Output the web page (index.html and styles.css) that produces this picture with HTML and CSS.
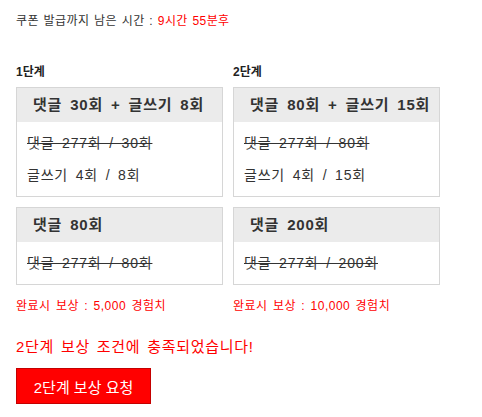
FILE: index.html
```html
<!DOCTYPE html>
<html lang="ko">
<head>
<meta charset="utf-8">
<link rel="stylesheet" href="styles.css">
</head>
<body>
<div class="page">
  <p class="timer">쿠폰 발급까지 남은 시간 : <span class="red">9시간 55분후</span></p>
  <div class="stages">
    <div class="stage">
      <h3 class="stage-title">1단계</h3>
      <div class="box">
        <div class="box-head">댓글 30회 + 글쓰기 8회</div>
        <div class="box-body">
          <div class="line done">댓글 277회 / 30회</div>
          <div class="line">글쓰기 4회 / 8회</div>
        </div>
      </div>
      <div class="box">
        <div class="box-head">댓글 80회</div>
        <div class="box-body">
          <div class="line done">댓글 277회 / 80회</div>
        </div>
      </div>
      <p class="reward">완료시 보상 : 5,000 경험치</p>
    </div>
    <div class="stage">
      <h3 class="stage-title">2단계</h3>
      <div class="box">
        <div class="box-head">댓글 80회 + 글쓰기 15회</div>
        <div class="box-body">
          <div class="line done">댓글 277회 / 80회</div>
          <div class="line">글쓰기 4회 / 15회</div>
        </div>
      </div>
      <div class="box">
        <div class="box-head">댓글 200회</div>
        <div class="box-body">
          <div class="line done">댓글 277회 / 200회</div>
        </div>
      </div>
      <p class="reward">완료시 보상 : 10,000 경험치</p>
    </div>
  </div>
  <p class="message">2단계 보상 조건에 충족되었습니다!</p>
  <button class="request">2단계 보상 요청</button>
</div>
</body>
</html>
```
FILE: styles.css
```css
* { box-sizing: border-box; }
body {
  margin: 0;
  font-family: "Liberation Sans", "Noto Sans CJK KR", sans-serif;
  color: #333;
  background: #fff;
}
.page { padding: 13px 16px 0 16px; }
.timer {
  margin: 0;
  font-size: 12px;
  line-height: 16px;
  color: #333;
  letter-spacing: 0.4px;
  word-spacing: 1px;
}
.red { color: #f00; }
.stages {
  display: flex;
  gap: 10px;
  margin-top: 35px;
}
.stage { width: 207px; display: flex; flex-direction: column; }
.stage-title {
  margin: 0 0 7px 0;
  font-size: 12px;
  line-height: 16px;
  font-weight: bold;
  color: #222;
}
.box {
  width: 207px;
  border: 1px solid #d6d6d6;
  margin-bottom: 10px;
}
.box-head {
  background: #ebebeb;
  font-size: 15px;
  font-weight: bold;
  line-height: 18px;
  padding: 8px 16px;
  color: #333;
  letter-spacing: 0.8px;
  word-spacing: 3px;
  white-space: nowrap;
}
.box-body { padding: 5px 10px; }
.line {
  font-size: 14px;
  line-height: 32px;
  color: #333;
  letter-spacing: 0.8px;
  word-spacing: 3px;
  white-space: nowrap;
}
.done { text-decoration: line-through; }
.reward {
  margin: 3px 0 0 0;
  font-size: 12px;
  line-height: 16px;
  color: #f00;
  letter-spacing: 0.5px;
  word-spacing: 1.5px;
  white-space: nowrap;
}
.message {
  margin: 24px 0 0 0;
  font-size: 15px;
  line-height: 18px;
  color: #f00;
  letter-spacing: 0.7px;
  word-spacing: 2px;
}
.request {
  display: block;
  margin-top: 12px;
  width: 135px;
  height: 36px;
  background: #f00;
  border: 1px solid #c40000;
  color: #fff;
  font-family: "Liberation Sans", "Noto Sans CJK KR", sans-serif;
  font-size: 15px;
  padding: 0;
  cursor: pointer;
}
```
